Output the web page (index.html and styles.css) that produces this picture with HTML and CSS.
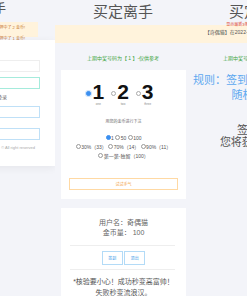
FILE: index.html
```html
<!DOCTYPE html>
<html lang="zh-CN">
<head>
  <meta charset="UTF-8" />
  <meta name="viewport" content="width=device-width, initial-scale=1.0"/>
  <title>买定离手</title>
  <link rel="stylesheet" href="styles.css">
</head>
<body>
  <div class="stage">

    <section class="screen screen-left">
      <div class="left-inner">
        <h1 class="title">买定离手</h1>
        <div class="notice short">
          <p>【奇偶猫】在2022-10-08押中了 2 金币!</p>
          <p>【奇偶猫】在2022-10-08押中了 1 金币!</p>
        </div>
        <div class="modal">
          <input class="field" type="text" />
          <input class="field focus" type="text" />
          <p class="switch">使用邮箱登录</p>
          <input class="field blue" type="text" />
          <input class="field blue gap" type="password" />
          <p class="copy">© All right reserved</p>
        </div>
      </div>
    </section>

    <section class="screen">
      <h1 class="title">买定离手</h1>
      <div class="notice"></div>
      <p class="last-draw">上期中奖号码为【 1 】-仅供参考</p>

      <div class="card bet-card">
        <div class="picks">
          <label class="pick"><span class="radio on"></span><span class="num">1<small>one</small></span></label>
          <label class="pick"><span class="radio"></span><span class="num">2<small>two</small></span></label>
          <label class="pick"><span class="radio"></span><span class="num">3<small>three</small></span></label>
        </div>
        <p class="hint">用您的金币进行下注</p>
        <div class="stakes">
          <p><span class="dot on"></span>1 <span class="dot"></span>50 <span class="dot"></span>100</p>
          <p><span class="dot"></span>30%（33） <span class="dot"></span>70%（14） <span class="dot"></span>90%（11）</p>
          <p><span class="dot"></span>第一第-独留（100）</p>
        </div>
        <button class="try">试试手气</button>
      </div>

      <div class="card user-card">
        <p>用户名：奇偶猫</p>
        <p>金币量： 100</p>
        <div class="divider"></div>
        <div class="actions">
          <button>签到</button>
          <button>退出</button>
        </div>
        <div class="divider second"></div>
        <p class="tip">*核验要小心！成功秒变高富帅！<br>失败秒变流浪汉。</p>
      </div>
    </section>

    <section class="screen">
      <h1 class="title">买定离手</h1>
      <div class="notice feed">
        <p class="red">显示最新3条中奖记录,每5秒刷新一次</p>
        <p>【奇偶猫】在2022-10-08 12:30:45押中了 2 金币!</p>
      </div>
      <p class="last-draw">上期中奖号码为【 1 】-仅供参考</p>
      <p class="rule">规则：签到后每天都可获得随机金币。</p>
      <p class="signed">签到成功<br>您将获得10金币</p>
    </section>

  </div>
</body>
</html>
```

FILE: styles.css
```css
body {
  margin: 0;
  background: #f3f4f9;
  font-family: "Liberation Sans", "Noto Sans CJK SC", sans-serif;
  overflow: hidden;
}

p {
  margin: 0;
}

.stage {
  display: flex;
  width: 247px;
  height: 296px;
  overflow: hidden;
}

.screen {
  flex: 0 0 136px;
  text-align: center;
}

.title {
  margin: 0;
  height: 25px;
  font-size: 15px;
  line-height: 23px;
  font-weight: normal;
  color: #555;
}

.notice {
  display: flow-root;
  height: 18px;
  background: #fff3dc;
}

.last-draw {
  margin: 11px 0 8px;
  font-size: 5px;
  line-height: 8px;
  color: #3ea53e;
}

/* left screen, login modal */
.screen-left {
  flex: 0 0 55px;
  overflow: hidden;
}

.left-inner {
  width: 146px;
  margin-left: -91px;
}

.screen-left .title {
  height: 22px;
  font-size: 12px;
  line-height: 18px;
}

.notice.short {
  height: 15px;
  margin-right: 17px;
  text-align: right;
  padding-right: 13px;
  font-size: 4px;
  line-height: 11px;
  color: #c8782e;
}

.modal {
  position: relative;
  margin-top: 3px;
  padding: 20px 15px 15px;
  background: #fff;
  box-shadow: 0 2px 8px rgba(0, 0, 0, 0.06);
}

.field {
  display: block;
  width: 100%;
  height: 12px;
  box-sizing: border-box;
  padding: 0;
  border: 1px solid #eee;
  background: #fff;
  outline: none;
}

.field + .field {
  margin-top: 5px;
}

.field.focus {
  border: 1.5px solid #a5ebdc;
  margin-right: -1px;
}

.field.blue {
  border-color: #bfe0f7;
}

.switch {
  margin: 5px 0 6px;
  padding-right: 33px;
  text-align: right;
  font-size: 5px;
  line-height: 6px;
  color: #666;
}

.field.gap {
  margin-top: 10px;
}

.copy {
  margin-top: 5px;
  padding-right: 5px;
  text-align: right;
  font-size: 4px;
  line-height: 6px;
  color: #aaa;
}

/* cards */
.card {
  margin: 0 5px 0 6px;
  background: #fff;
}

.bet-card {
  padding: 12px 0 9px;
}

.picks {
  display: flex;
  justify-content: center;
  gap: 7px;
  padding-right: 7px;
}

.pick {
  display: flex;
  align-items: flex-start;
  gap: 1px;
}

.radio {
  width: 3px;
  height: 3px;
  margin-top: 9px;
  border: 0.5px solid #aaa;
  border-radius: 50%;
}

.radio.on {
  background: #3b8ff0;
  border-color: #3b8ff0;
  box-shadow: 0 0 0 1px rgba(59, 143, 240, 0.25);
}

.num {
  display: flex;
  flex-direction: column;
  align-items: center;
  font-size: 21px;
  font-weight: bold;
  line-height: 20px;
  color: #111;
}

.num small {
  font-size: 3px;
  line-height: 5px;
  font-weight: normal;
  color: #888;
}

.hint {
  margin-top: 12px;
  font-size: 4px;
  line-height: 6px;
  color: #666;
}

.stakes {
  margin-top: 8.5px;
  font-size: 5px;
  line-height: 9px;
  color: #555;
}

.dot {
  display: inline-block;
  width: 3px;
  height: 3px;
  margin-right: 0.5px;
  border: 0.5px solid #999;
  border-radius: 50%;
  vertical-align: -0.5px;
}

.dot.on {
  background: #3b8ff0;
  border-color: #3b8ff0;
}

.try {
  display: block;
  width: 109px;
  height: 12px;
  margin: 17.5px auto 0;
  padding: 0;
  border: 1px solid #ffd9a3;
  background: #fff;
  color: #f2a23c;
  font-family: inherit;
  font-size: 4px;
}

.user-card {
  margin-top: 9px;
  padding-top: 10px;
  height: 100px;
}

.user-card p {
  font-size: 7px;
  line-height: 10px;
  color: #666;
}

.divider {
  margin: 7px 11px 0 9px;
  border-top: 1px solid #eee;
}

.divider.second {
  margin-top: 4px;
}

.actions {
  display: flex;
  justify-content: center;
  gap: 1.5px;
  margin-top: 5px;
}

.actions button {
  width: 21px;
  height: 14px;
  padding: 0;
  border: 1px solid #b3dbf7;
  background: #fff;
  color: #3a9be8;
  font-family: inherit;
  font-size: 4px;
}

.user-card .tip {
  margin-top: 6px;
  font-size: 7px;
  line-height: 11px;
  color: #555;
}

/* right screen */
.feed {
  font-size: 5px;
  color: #555;
}

.feed .red {
  margin-top: -3px;
  font-size: 4px;
  line-height: 5px;
  color: #e0452f;
  white-space: nowrap;
}

.feed p + p {
  margin-top: 2px;
  line-height: 6px;
  white-space: nowrap;
}

.rule {
  margin-top: 10.5px;
  font-size: 11px;
  line-height: 15px;
  color: #5da8f0;
}

.signed {
  margin-top: 21.5px;
  font-size: 11px;
  line-height: 12px;
  color: #555;
}
```
